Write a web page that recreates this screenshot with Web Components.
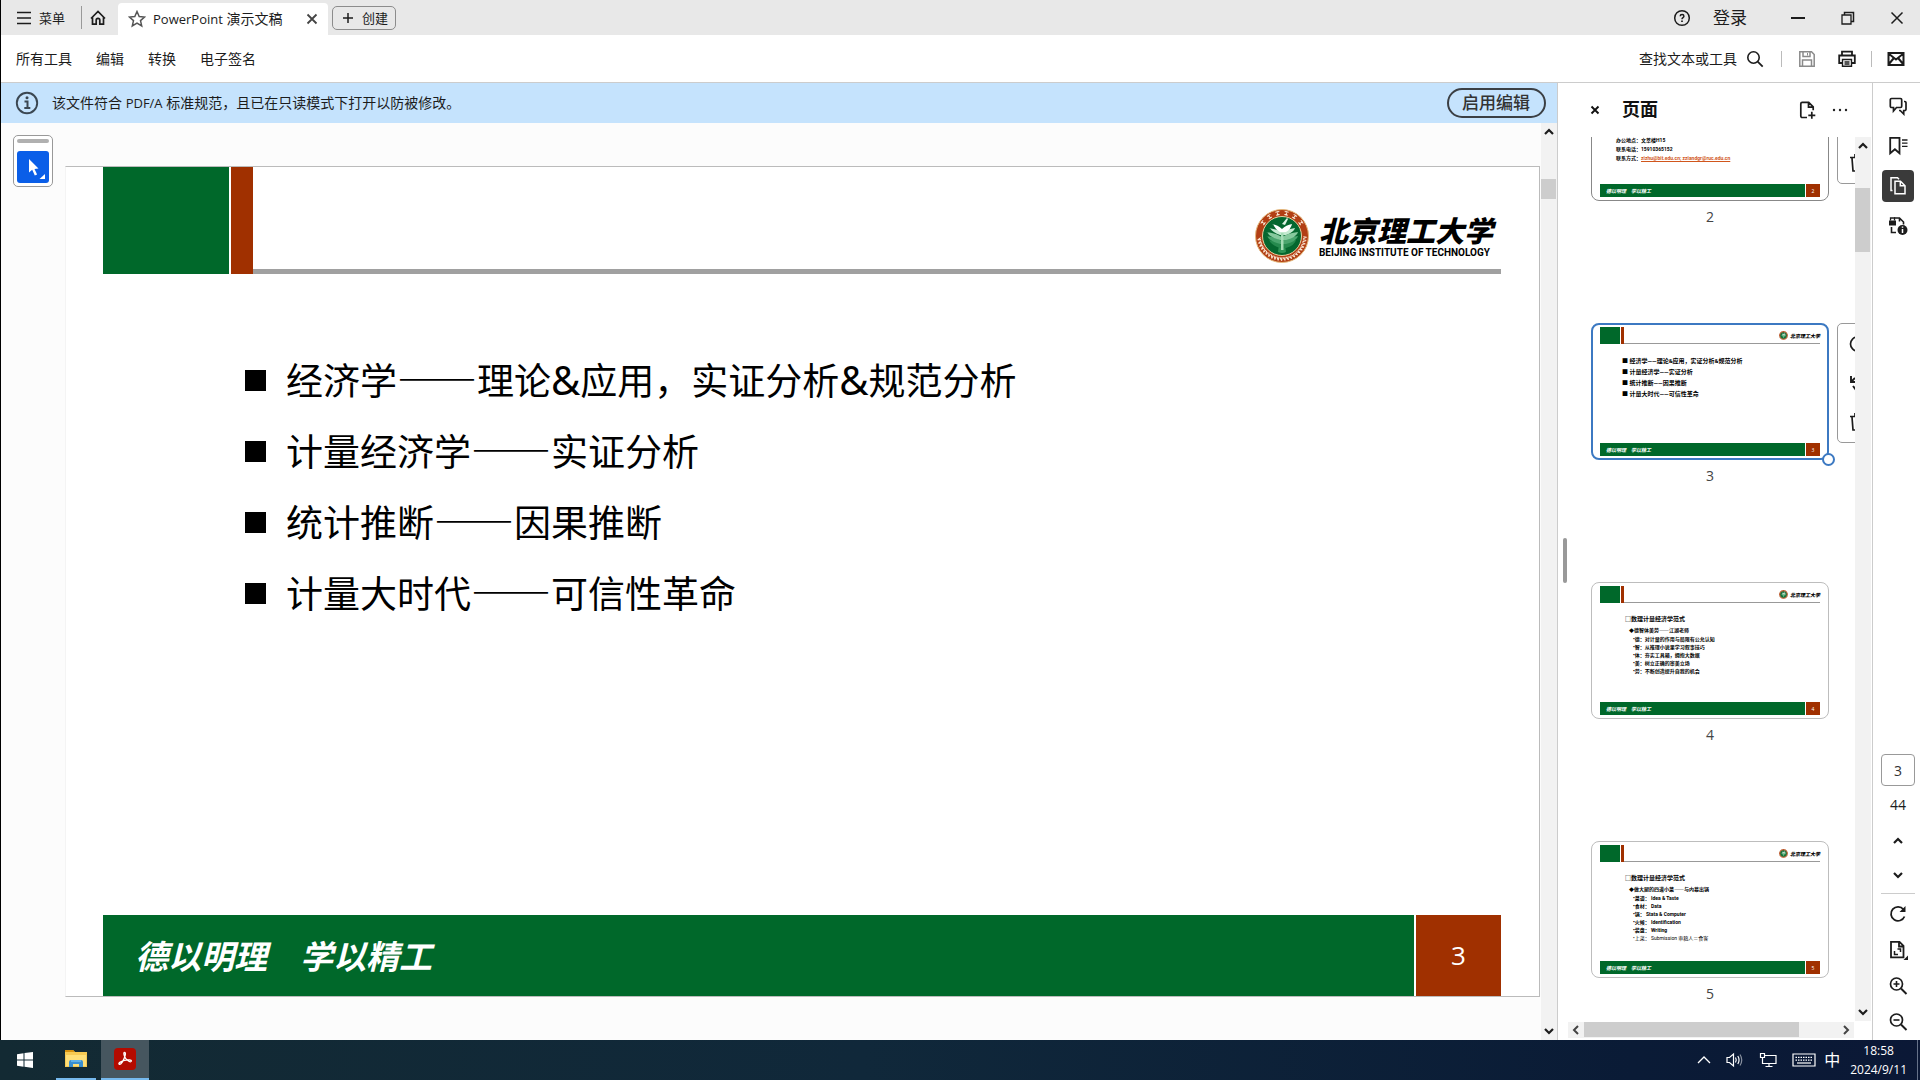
<!DOCTYPE html>
<html lang="zh-CN">
<head>
<meta charset="utf-8">
<title>PowerPoint 演示文稿</title>
<style>
html,body{margin:0;height:100%}
body{font-family:"Open Sans","Noto Sans CJK SC",sans-serif;font-size:14px;line-height:20px;color:#1c1c1c;background:#000}
</style>
</head>
<body>
<pdf-app></pdf-app>
<script>
const RESET = `*{box-sizing:border-box}button,input{font:inherit;color:inherit;background:none;border:0;padding:0;margin:0}button{display:flex;align-items:center;white-space:nowrap}`;
function define(name, css, html) {
  customElements.define(name, class extends HTMLElement {
    constructor() {
      super();
      const t = document.createElement('template');
      const markup = typeof html === 'function' ? html(this) : html;
      t.innerHTML = `<style>${RESET}${css}</style>${markup}`;
      this.attachShadow({ mode: 'open' }).append(t.content.cloneNode(true));
    }
  });
}

/* ---------- icons ---------- */
const ICONS = {
  menu: [16,16,'<path d="M1 2.500h14M1 8h14M1 13.500h14" stroke-width="1.600"/>'],
  home: [18,18,'<path d="M2 9.500 9 2.500l7 7M3.500 8v7.200h3.700v-4a1.800 1.800 0 0 1 3.600 0v4h3.700V8" stroke-width="1.700"/>'],
  star: [18,18,'<path d="m9 1.500 2.200 5 5.400.5-4.100 3.600 1.200 5.300L9 13.100l-4.700 2.800 1.200-5.300L1.400 7l5.400-.5z" stroke="#555" stroke-width="1.500"/>'],
  x: [12,12,'<path d="m1.500 1.500 9 9M10.500 1.500l-9 9" stroke="#444" stroke-width="1.800"/>'],
  xs: [12,12,'<path d="m2.500 2.500 7 7M9.500 2.500l-7 7" stroke="#111" stroke-width="1.900"/>'],
  plus: [12,12,'<path d="M6 1v10M1 6h10" stroke-width="1.500"/>'],
  help: [18,18,'<circle cx="9" cy="9" r="7.300" stroke-width="1.500"/><path d="M7.200 7.200c.1-2.200 3.700-2.100 3.700 0 0 1.500-1.900 1.400-1.900 3" stroke-width="1.500"/><path d="M9 11.600v1.500" stroke-width="1.700"/>'],
  min: [16,14,'<path d="M1 7h14" stroke-width="2"/>'],
  restore: [14,14,'<path d="M1 4h9v9H1z" stroke-width="1.300"/><path d="M3.500 4V1.500h9v9H10" stroke-width="1.500"/>'],
  close: [14,14,'<path d="m1.500 1.500 11 11M12.500 1.500l-11 11" stroke-width="1.500"/>'],
  search: [18,18,'<circle cx="7.500" cy="7.500" r="5.700" stroke-width="1.600"/><path d="m11.700 11.700 5 5" stroke-width="1.800"/>'],
  save: [18,18,'<path d="M1.800 1.800h11.700l2.700 2.700v11.700H1.800zM5 2v4.500h7V2M4.500 16v-6h9v6" stroke="#8a8a8a" stroke-width="1.500"/><path d="M9.500 3v2.500" stroke="#8a8a8a"/>'],
  print: [18,18,'<path d="M4 5V1.700h10V5M4 13H1.200V5.500h15.600V13H14" stroke-width="1.800"/><path d="M4.500 9.500h9v6.700h-9zM6.500 12h5M6.500 14h5" stroke-width="1.400"/>'],
  mail: [18,14,'<path d="M1.500 1h15v12h-15zM1.500 1.500 9 7.500l7.500-6M1.500 12.500l5-6M16.500 12.500l-5-6" stroke-width="2"/>'],
  info: [24,24,'<circle cx="12" cy="12" r="10.200" stroke="#3b4752" stroke-width="1.900"/><path d="M9.500 10.500H12.500V17M9.300 17h6" stroke="#3b4752" stroke-width="2"/><circle cx="12" cy="6.800" r="1.500" fill="#3b4752" stroke="none"/>'],
  cursor: [32,32,'<path d="M12 8v13.500l3.200-2.700 2.600 5.700 2.300-1-2.600-5.500 4-.4z" fill="#fff" stroke="none"/><path d="M28 23v5h-5.500z" fill="#fff" stroke="none"/>'],
  addpage: [18,18,'<path d="M8 16.500H3.200a1.400 1.400 0 0 1-1.400-1.400V2.700A1.400 1.400 0 0 1 3.200 1.300h6.500l4.500 4.500v3.500M9.500 1.500v4.600h4.500M12.800 10.800v7M9.300 14.300h7" stroke-width="1.700"/>'],
  dots: [16,4,'<g fill="#222" stroke="none"><circle cx="2" cy="2" r="1.200"/><circle cx="8" cy="2" r="1.200"/><circle cx="14" cy="2" r="1.200"/></g>'],
  comment: [20,20,'<path d="M3.500 2.500h9a1.200 1.200 0 0 1 1.200 1.200v6.600a1.200 1.200 0 0 1-1.200 1.200H8.500L5.500 15v-3.500h-2a1.200 1.200 0 0 1-1.200-1.200V3.700a1.200 1.200 0 0 1 1.200-1.200z" stroke-width="1.700"/><path d="M16 5.500h.8a1.200 1.200 0 0 1 1.200 1.200v6.600a1.200 1.200 0 0 1-1.200 1.200H15.700V18l-3.500-3.500H11" stroke-width="1.700"/>'],
  bookmark: [20,20,'<path d="M2.200 1.800h9.300v15.500l-4.600-4-4.700 4z" stroke-width="1.800"/><path d="M14 4h5.500M14 7.200h5.500M14 10.400h5.500" stroke-width="1.300"/>'],
  pages: [20,20,'<path d="M7 5.200h5.500l4.500 4.500v8H7zM12.300 5.500v4.300h4.400" stroke="#fff" stroke-width="1.500"/><path d="M4.500 14.500H3V1.800h6.500L11 3.200" stroke="#fff" stroke-width="1.500"/>'],
  docinfo: [20,20,'<path d="M6 2h5.500l4 4v2.500M11.500 2v3.500M3.500 11v5.500h4.500" stroke-width="1.600"/><path d="M1 4.500h7v5H1z" fill="#1c1c1c" stroke="none"/><path d="M2.500 4.500V2h4v2.500" stroke-width="1.300"/><circle cx="14.500" cy="14" r="5" fill="#1c1c1c" stroke="none"/><path d="M14.500 13v4M14.500 10.500v1.200" stroke="#fff" stroke-width="1.500"/>'],
  up: [12,12,'<path d="m2 8 4-4 4 4" stroke-width="2.200"/>'],
  down: [12,12,'<path d="m2 4 4 4 4-4" stroke-width="2.200"/>'],
  left: [12,12,'<path d="m8 2-4 4 4 4" stroke="#444" stroke-width="2"/>'],
  right: [12,12,'<path d="m4 2 4 4-4 4" stroke="#444" stroke-width="2"/>'],
  rotate: [20,20,'<path d="M16.500 12.500a7 7 0 1 1-1-7" stroke-width="1.800"/><path d="M17.500 2v6h-6z" fill="#1c1c1c" stroke="none"/>'],
  fit: [20,20,'<path d="M3 1.800h8.500l4 4v11.500H3zM11 2v4.500h4.500" stroke-width="1.800"/><path d="M6.500 11v3.500H10M12.500 12V9H9.500" stroke-width="1.500"/><path d="M20 15.500V20h-4.500z" fill="#1c1c1c" stroke="none"/>'],
  zoomin: [20,20,'<circle cx="8.500" cy="8" r="6" stroke-width="1.700"/><path d="m13 12.500 5.500 5.500" stroke-width="2"/><path d="M8.500 5v6M5.500 8h6" stroke-width="1.600"/>'],
  zoomout: [20,20,'<circle cx="8.500" cy="8" r="6" stroke-width="1.700"/><path d="m13 12.500 5.500 5.500" stroke-width="2"/><path d="M5.500 8h6" stroke-width="1.600"/>'],
  trash: [20,20,'<path d="M2 4.500h16M7 4V1.800h6V4M4 5l1 13h10l1-13M8 8v7M12 8v7" stroke-width="1.700"/>'],
  turnl: [20,20,'<path d="M9.500 3a7 7 0 1 0 7 7" stroke-width="1.700"/>'],
  turnr: [20,20,'<path d="M3 3v6h6M4 8l3-3M5 13l3 4M10 16h4" stroke-width="1.900"/>'],
  win: [16,16,'<path d="M0 2.300 6.500 1.300V7.500H0zM7.500 1.100 16 0v7.500H7.500zM0 8.500h6.500v6.200L0 13.700zM7.500 8.500H16V16l-8.500-1.200z" fill="#fff" stroke="none"/>'],
  folder: [22,20,'<path d="M0 1h8l2 2h12v15H0z" fill="#f7ca53" stroke="none"/><path d="M0 1h8l2 2H0z" fill="#d8930f" stroke="none"/><path d="M1 6h20v11H1z" fill="#ffdf78" stroke="none"/><path d="M4 18v-5q0-2 2-2h10q2 0 2 2v5h-4v-3H8v3z" fill="#3a8fd0" stroke="none"/><path d="M6 11h10v2H6z" fill="#60b1e8" stroke="none"/>'],
  acrobat: [22,22,'<rect width="22" height="22" rx="4" fill="#b30b00" stroke="none"/><path d="M10.500 4.500c1.600 0 .8 3-.1 5.300C9.300 12.600 7 17 5.300 16.300c-1.500-.8 1.200-3 5.200-4 3.500-.9 7.500-.5 6.800 1-.8 1.400-3.900-.6-5.500-2.600-1.500-2-2.700-6.200-1.300-6.200z" stroke="#fff" stroke-width="1.300"/>'],
  tup: [14,10,'<path d="m1 8 6-6 6 6" stroke="#fff" stroke-width="1.300"/>'],
  volume: [18,16,'<path d="M1 5.500h2.500l4-3.500v12l-4-3.500H1z" stroke="#fff" stroke-width="1.200"/><path d="M9.500 5.500q1.500 2.500 0 5M11.800 4q2.500 4 0 8" stroke="#fff" stroke-width="1.200"/><path d="M14 2.500q3.500 5.500 0 11" stroke="#89919f" stroke-width="1.200"/>'],
  net: [18,16,'<path d="M5.500 3.500H17v8H3.500V7M10 11.500v3M6.500 14.500h7M1.500 1.500h4v4h-4zM3.500 5.500V11" stroke="#fff" stroke-width="1.200"/>'],
  kbd: [24,14,'<path d="M1 1h22v12H1z" stroke="#fff" stroke-width="1.200"/><path d="M3.500 4.300h17M3.500 7.200h17" stroke="#fff" stroke-width="1.300" stroke-dasharray="1.500 1"/><path d="M5 10h14" stroke="#fff" stroke-width="1.200"/>']
};
define('app-icon', ':host{display:block;flex:none}svg{display:block}', el => {
  const [w, h, body] = ICONS[el.getAttribute('name')];
  return `<svg width="${w}" height="${h}" viewBox="0 0 ${w} ${h}" fill="none" stroke="#1c1c1c" aria-hidden="true">${body}</svg>`;
});

/* ---------- university mark ---------- */
define('university-seal', ':host{display:block;flex:none;width:var(--seal,54px);height:var(--seal,54px)}svg{display:block;width:100%;height:100%}', () => {
  let marks = '';
  for (let a = 95; a <= 265; a += 8) {
    const r = a * Math.PI / 180, x = (27 + 23 * Math.sin(r)).toFixed(1), y = (27 - 23 * Math.cos(r)).toFixed(1);
    marks += `<path d="M${x} ${y}m-1-1.700 2 3.400m-2 0v-3.400" transform="rotate(${a} ${x} ${y})"/>`;
  }
  for (const a of [-55, -33, -11, 11, 33, 55]) marks += `<path d="M25 2.500h4M27 1.800v4.400M25.200 5.500h3.600" transform="rotate(${a} 27 27)"/>`;
  const wing = (w, y, d, c) => `<path d="M${27 - w} ${y}q${w * .6} 1 ${w} ${d}q${w * .4} ${1 - d} ${w} ${-d}q-1 ${d} -${w - 4} ${d + 3}h-6q-${w - 5} -3 -${w - 4 + 1} -${d + 3}z" fill="${c}"/>`;
  return `<svg viewBox="0 0 54 54"><circle cx="27" cy="27" r="26.500" fill="#b23f14" stroke="#e3b87c"/><g stroke="#fbe8d5" stroke-width="1" fill="none">${marks}</g><circle cx="27" cy="27" r="19.500" fill="#05672f" stroke="#e8cfa0"/>
<path d="M24 36q3 3 6 0l1 7q-4 2-8 0z" fill="#2f9457"/>${wing(14, 31, 5, '#268a4e')}${wing(16, 27, 5, '#4aa56e')}${wing(16, 23, 5, '#86c99d')}${wing(13, 19, 4, '#c4ead0')}${wing(10, 15, 5, '#fff')}
<path d="M26 24h2.500v17H26z" fill="#a5dcb6"/><path d="m27 15 5-6 1 1-3 6z" fill="#dff4e5"/></svg>`;
});

/* ---------- title bar ---------- */
define('title-bar', `
:host{display:flex;align-items:center;height:35px;background:#e8e8e8;padding-left:15px}
.menu{gap:7px;font-size:13px}.rule{width:1px;height:23px;background:#999;margin:0 7px 0 16px}
.tab{align-self:flex-end;height:32px;background:#fff;border-radius:4px 4px 0 0;margin-left:11px;padding:0 10px;gap:7px;width:210px}
.tab app-icon:last-child{margin-left:auto}.lat{font-size:13px}
.new{height:24px;width:64px;border:1px solid #8c8c8c;border-radius:5px;margin-left:4px;padding-left:9px;gap:8px;font-size:13px}
.sys{display:flex;align-items:center;margin-left:auto;padding-right:16px}
.login{font-size:17px;margin:0 43px 0 22px}.b{margin-right:35px}`,
`<button class="menu"><app-icon name="menu"></app-icon>菜单</button><span class="rule"></span>
<button aria-label="主页"><app-icon name="home"></app-icon></button>
<button class="tab"><app-icon name="star"></app-icon><span><span class="lat">PowerPoint</span> 演示文稿</span><app-icon name="x"></app-icon></button>
<button class="new"><app-icon name="plus"></app-icon>创建</button>
<div class="sys"><button aria-label="帮助"><app-icon name="help"></app-icon></button><button class="login">登录</button>
<button class="b" aria-label="最小化"><app-icon name="min"></app-icon></button><button class="b" aria-label="还原"><app-icon name="restore"></app-icon></button><button aria-label="关闭"><app-icon name="close"></app-icon></button></div>`);

/* ---------- tool bar ---------- */
define('tool-bar', `
:host{display:flex;align-items:center;height:48px;background:#fff;border-bottom:1px solid #ccc;padding:0 15px}
nav{display:flex;gap:24px}.r{display:flex;align-items:center;margin-left:auto}
.find{gap:9px;margin-right:17px}.rule{width:1px;height:16px;background:#bbb}
.save{margin:0 22px 0 16px}.print{margin-right:15px}.mail{margin-left:15px}`,
`<nav><button>所有工具</button><button>编辑</button><button>转换</button><button>电子签名</button></nav>
<div class="r"><button class="find">查找文本或工具<app-icon name="search"></app-icon></button><span class="rule"></span>
<button class="save" aria-label="保存"><app-icon name="save"></app-icon></button><button class="print" aria-label="打印"><app-icon name="print"></app-icon></button><span class="rule"></span><button class="mail" aria-label="邮件"><app-icon name="mail"></app-icon></button></div>`);

define('info-bar', `
:host{display:flex;align-items:center;height:40px;background:#c5e3fd;padding:0 11px 0 14px;gap:13px}
button{margin-left:auto;height:30px;border:2px solid #3b3f44;border-radius:15px;padding:0 14px 0 13px;font-size:17px;font-weight:500;color:#333}`,
`<app-icon name="info"></app-icon><span><slot></slot></span><button>启用编辑</button>`);

/* ---------- scroll bar ---------- */
define('scroll-bar', `
:host{display:flex;flex-direction:column;width:16px;background:#f2f2f2;flex:none}
:host([horizontal]){flex-direction:row;width:auto;height:16px}
.a{display:flex;align-items:center;justify-content:center;width:16px;height:18px}
.lead{flex:none;height:var(--lead,0);width:16px}.thumb{background:#cdcdcd;width:15px;height:var(--thumb)}
:host([horizontal]) .a{height:15px}:host([horizontal]) .lead{width:0}:host([horizontal]) .thumb{width:75%;height:15px}
.end{margin-top:auto}:host([horizontal]) .end{margin:0 0 0 auto}`,
el => { const h = el.hasAttribute('horizontal'); return `<span class="a"><app-icon name="${h ? 'left' : 'up'}"></app-icon></span><span class="lead"></span><span class="thumb"></span><span class="a end"><app-icon name="${h ? 'right' : 'down'}"></app-icon></span>`; });

/* ---------- slide ---------- */
define('slide-page', `
:host{display:flex;flex-direction:column;background:#fff;border:1px solid #bbb;border-left-color:#f4f4f4;padding:0 38px 0 37px;flex:1;color:#000}
header{display:flex;height:107px;align-items:flex-end}
.g{background:#00682a;width:126px;height:107px}.o{background:#a03000;width:22px;height:107px;margin-left:2px}
.h{flex:1;align-self:stretch;border-bottom:5px solid #a0a0a0;display:flex;justify-content:flex-end;align-items:flex-start;padding:42px 8px 0 0;gap:10px}
.n{display:flex;flex-direction:column;padding-top:2px}.cn{font:italic 900 29px/36px "Noto Sans CJK SC",sans-serif}.en{font:bold 10px/12px Roboto,"Liberation Sans",sans-serif}
main{flex:1;padding:69px 0 0 142px}
footer{display:flex;height:81px;gap:2px}.m{flex:1;background:#00682a;color:#fff;font:italic bold 33px/81px "Noto Sans CJK SC",sans-serif;padding-left:32px}
.p{width:85px;background:#a03000;color:#fff;font-size:26px;line-height:81px;text-align:center}`,
`<header><div class="g"></div><div class="o"></div><div class="h"><university-seal></university-seal><div class="n"><span class="cn">北京理工大学</span><span class="en">BEIJING INSTITUTE OF TECHNOLOGY</span></div></div></header>
<main><slot></slot></main><footer><div class="m">德以明理　学以精工</div><div class="p">3</div></footer>`);

define('slide-point', `
:host{display:flex;align-items:center;height:71px;gap:20px;font:37px/71px "Noto Sans CJK SC",sans-serif}
i{width:21px;height:21px;background:#000;margin-top:3px}`, `<i></i><span><slot></slot></span>`);

define('quick-tools', `
:host{display:flex;flex-direction:column;align-items:center;width:40px;height:52px;background:#fff;border:1px solid #999;border-radius:5px;padding-top:3px}
i{width:32px;height:4px;border-radius:2px;background:#b0b0b0;margin-bottom:8px}button{width:32px;height:32px;background:#0a5ee8;border-radius:3px}`,
`<i></i><button aria-label="选择"><app-icon name="cursor"></app-icon></button>`);

/* ---------- thumbnails ---------- */
define('page-thumb', `
:host{display:flex;gap:8px;height:259px;align-items:flex-start}
.c{width:238px;flex:none;position:relative}
.card{height:137px;border:1px solid #bdbdbd;border-radius:8px;background:#fff;display:flex;flex-direction:column;padding:3px 8px 3px;color:#000}
:host([selected]) .card{border:2px solid #3c79c2;padding:2px 7px 2px}:host([page="2"]) .card{border-color:#888}
header{display:flex;height:17px;--seal:9px}.g{width:20px;background:#00682a}.o{width:3px;background:#a03000;margin-left:1px}
.h{flex:1;display:flex;justify-content:flex-end;align-items:center;gap:2px;border-bottom:1px solid #999;font:italic 900 5px/7px "Noto Sans CJK SC",sans-serif}
main{flex:1}
footer{display:flex;gap:1px;height:13px;color:#fff}.m{flex:1;background:#00682a;font:italic bold 5px/14px "Noto Sans CJK SC",sans-serif;padding-left:6px}
.p{width:14px;background:#a03000;font-size:5px;line-height:14px;text-align:center}
.num{text-align:center;margin-top:6px;color:#444}
.dot{position:absolute;left:231px;top:130px;width:13px;height:13px;border:2px solid #3c79c2;border-radius:50%;background:#fff}
.act{width:40px;height:120px;flex:none;border:1px solid #999;border-radius:5px;display:flex;flex-direction:column;justify-content:space-between;padding:10px}`,
el => { const p = el.getAttribute('page'), s = el.hasAttribute('selected'), scrolled = p === '2';
return `<div class="c"><div class="card"><header>${scrolled ? '' : '<div class="g"></div><div class="o"></div><div class="h"><university-seal></university-seal>北京理工大学</div>'}</header><main><slot></slot></main><footer><div class="m">德以明理　学以精工</div><div class="p">${p}</div></footer></div>${s ? '<span class="dot"></span>' : ''}<div class="num">${p}</div></div>${s || scrolled ? `<div class="act"><app-icon name="turnl"></app-icon><app-icon name="turnr"></app-icon><app-icon name="trash"></app-icon></div>` : ''}`; });

define('thumb-text', `
:host{display:block;font:bold 5px/8px Roboto,"Noto Sans CJK SC",sans-serif;padding:11px 0 0 25px;white-space:nowrap}
:host([kind="points"]){font-size:6px;line-height:11px;padding:11px 0 0 22px}
:host([kind="contact"]){line-height:9px;padding:51px 0 0 16px}
::slotted(h4){font:bold 6px/10px "Noto Sans CJK SC",sans-serif;margin:0}
::slotted(h5){font:bold 5px/10px "Noto Sans CJK SC",sans-serif;margin:1px 0 0 4px}
::slotted(p){margin:0}::slotted(p.i){margin-left:8px}`, '<slot></slot>');

define('pages-panel', `
:host{display:flex;flex-direction:column;width:314px;background:#fff;flex:none;position:relative}
header{display:flex;align-items:center;height:54px;padding:0 24px 0 31px;flex:none}
h2{font-size:18px;line-height:24px;font-weight:700;margin:0 auto 2px 21px;color:#111}.add{margin-right:15px}
.row{display:flex;flex:1;min-height:0;padding-right:1px}.list{flex:1;overflow:hidden;padding-left:33px;min-width:0}.strip{margin-top:-73px}
.grip{position:absolute;left:5px;top:455px;width:4px;height:45px;border-radius:2px;background:#999}
.hs{padding:1px 18px 2px 10px}`,
`<header><button aria-label="关闭面板"><app-icon name="xs"></app-icon></button><h2>页面</h2><button class="add" aria-label="插入页面"><app-icon name="addpage"></app-icon></button><button aria-label="更多"><app-icon name="dots"></app-icon></button></header>
<span class="grip"></span>
<div class="row"><div class="list"><div class="strip">
<page-thumb page="2"><thumb-text kind="contact"><p>办公地点：文萃楼H15</p><p>联系电话：15910365152</p><p>联系方式：<a href="#" style="color:#d1561c">zizhu@bit.edu.cn; zziandgr@ruc.edu.cn</a></p></thumb-text></page-thumb>
<page-thumb page="3" selected><thumb-text kind="points"><p>■ 经济学——理论&amp;应用，实证分析&amp;规范分析</p><p>■ 计量经济学——实证分析</p><p>■ 统计推断——因果推断</p><p>■ 计量大时代——可信性革命</p></thumb-text></page-thumb>
<page-thumb page="4"><thumb-text><h4>□数理计量经济学范式</h4><h5>◆德智体美劳——江湖老师</h5><p class="i">•德：对计量的作用与局限有公允认知</p><p class="i">•智：从推理小说里学习叙事技巧</p><p class="i">•体：夯实工具箱，拥抱大数据</p><p class="i">•美：树立正确的审美立场</p><p class="i">•劳：不断创造提升自我的机会</p></thumb-text></page-thumb>
<page-thumb page="5"><thumb-text><h4>□数理计量经济学范式</h4><h5>◆做大厨的四道小菜——与内幕出锅</h5><p class="i">•菜谱： Idea &amp; Taste</p><p class="i">•食材： Data</p><p class="i">•锅： Stata &amp; Computer</p><p class="i">•火候： Identification</p><p class="i">•装盘： Writing</p><p class="i" style="font-weight:400">•上菜： Submission 审稿人＝食客</p></thumb-text></page-thumb>
</div></div><scroll-bar style="--lead:33px;--thumb:64px"></scroll-bar></div>
<div class="hs"><scroll-bar horizontal></scroll-bar></div>`);

define('side-rail', `
:host{display:flex;flex-direction:column;align-items:center;width:48px;background:#fff;border-left:1px solid #ccc;padding:7px 0 0 3px;flex:none}
button{width:32px;height:32px;justify-content:center;border-radius:4px;flex:none}
.top{display:flex;flex-direction:column;gap:8px}.on{background:#3a3a3a}
.bot{display:flex;flex-direction:column;align-items:center;margin-top:auto}
input{width:34px;height:32px;border:1px solid #999;border-radius:4px;text-align:center;color:#333}
span{margin:9px 0 9px}.rule{width:34px;height:1px;background:#ccc;margin:1px 0 2px}.s{height:34px}.t{height:36px}`,
`<div class="top"><button aria-label="注释"><app-icon name="comment"></app-icon></button><button aria-label="书签"><app-icon name="bookmark"></app-icon></button><button class="on" aria-label="页面"><app-icon name="pages"></app-icon></button><button aria-label="文档信息"><app-icon name="docinfo"></app-icon></button></div>
<div class="bot"><input aria-label="页码" value="3"><span>44</span><button class="s" aria-label="上一页"><app-icon name="up"></app-icon></button><button class="s" aria-label="下一页"><app-icon name="down"></app-icon></button><div class="rule"></div><button class="t" aria-label="旋转"><app-icon name="rotate"></app-icon></button><button class="t" aria-label="页面显示"><app-icon name="fit"></app-icon></button><button class="t" aria-label="放大"><app-icon name="zoomin"></app-icon></button><button class="t" aria-label="缩小"><app-icon name="zoomout"></app-icon></button></div>`);

/* ---------- task bar ---------- */
define('task-bar', `
:host{display:flex;height:40px;background:linear-gradient(90deg,#132a33,#10283a 45%,#0a1b36 85%,#0b1836);color:#fff;flex:none;padding-left:1px}
button{justify-content:center;height:40px}.w{width:48px;margin-right:7px}.f{width:40px;border-bottom:2px solid #76b9ed;margin-right:5px}.a{width:48px;background:#46565f;border-bottom:2px solid #76b9ed}
.tray,.g{display:flex;align-items:center;gap:15px}.tray{margin-left:auto}.g{gap:12px}.g:last-child{gap:8px}.ime{font-size:16px}
.clock{display:block;font-size:12px;line-height:19px;text-align:center;padding:0 2px}.end{width:3px;height:40px;border-left:1px solid #66728a}`,
`<button class="w" aria-label="开始"><app-icon name="win"></app-icon></button><button class="f" aria-label="文件资源管理器"><app-icon name="folder"></app-icon></button><button class="a" aria-label="Acrobat"><app-icon name="acrobat"></app-icon></button>
<div class="tray"><app-icon name="tup"></app-icon><app-icon name="volume"></app-icon><app-icon name="net"></app-icon><div class="g"><app-icon name="kbd"></app-icon><span class="ime">中</span><div class="g"><button class="clock"><div>18:58</div><div>2024/9/11</div></button><span class="end"></span></div></div></div>`);

define('pdf-app', `
:host{display:flex;flex-direction:column;height:100vh}
.win{display:flex;flex-direction:column;flex:1;min-height:0;margin-left:1px}
.body{display:flex;flex:1;min-height:0}
.main{display:flex;flex-direction:column;flex:1;min-width:0;border-right:1px solid #ccc;background:#fcfcfc}
.doc{display:flex;flex:1;min-height:0}.left{width:64px;padding:12px 0 0 12px;flex:none}
.paper{flex:1;display:flex;padding:43px 1px 43px 0;min-width:0}.u{font-size:40px;font-weight:700}.amp{font-family:"Noto Sans",sans-serif;font-size:40px}.lat{font-size:13px}`,
`<div class="win"><title-bar></title-bar><tool-bar></tool-bar><div class="body">
<div class="main"><info-bar>该文件符合 <span class="lat">PDF/A</span> 标准规范，且已在只读模式下打开以防被修改。</info-bar>
<div class="doc"><div class="left"><quick-tools></quick-tools></div><div class="paper"><slide-page>
<slide-point>经济学<span class="u">——</span>理论<span class="amp">&amp;</span>应用，实证分析<span class="amp">&amp;</span>规范分析</slide-point>
<slide-point>计量经济学<span class="u">——</span>实证分析</slide-point>
<slide-point>统计推断<span class="u">——</span>因果推断</slide-point>
<slide-point>计量大时代<span class="u">——</span>可信性革命</slide-point>
</slide-page></div><scroll-bar style="--lead:38px;--thumb:20px"></scroll-bar></div></div>
<pages-panel></pages-panel><side-rail></side-rail></div></div><task-bar></task-bar>`);
</script>
</body>
</html>
